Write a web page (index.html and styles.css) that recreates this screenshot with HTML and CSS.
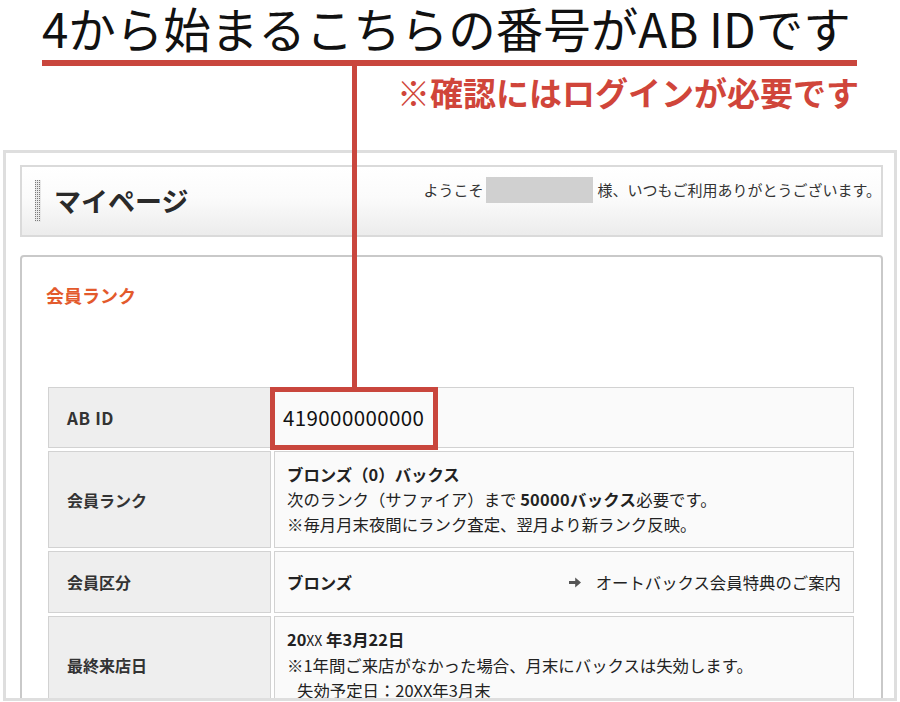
FILE: index.html
```html
<!DOCTYPE html>
<html lang="ja">
<head>
<meta charset="utf-8">
<title>AB ID</title>
<link rel="stylesheet" href="styles.css">
</head>
<body>
<div class="page">
  <header class="notice">
    <h1 class="notice-title">4から始まるこちらの番号がAB IDです</h1>
    <p class="notice-sub">※確認にはログインが必要です</p>
  </header>
  <div class="frame">
    <div class="mypage-head">
      <div class="mypage-title"><span class="dots"></span><h2>マイページ</h2></div>
      <div class="welcome">ようこそ<span class="name-mask"></span>様、いつもご利用ありがとうございます。</div>
    </div>
    <section class="rank-box">
      <h3 class="rank-title">会員ランク</h3>
      <table class="info">
        <tr class="row-short">
          <th class="latin">AB ID</th>
          <td class="abid">419000000000</td>
        </tr>
        <tr>
          <th>会員ランク</th>
          <td><strong>ブロンズ（0）バックス</strong><br>次のランク（サファイア）まで <strong class="num">50000バックス</strong>必要です。<br>※毎月月末夜間にランク査定、翌月より新ランク反映。</td>
        </tr>
        <tr class="row-short row-3">
          <th>会員区分</th>
          <td>
            <div class="split">
              <strong>ブロンズ</strong>
              <a class="guide" href="#"><svg class="arrow" width="12" height="11" viewBox="0 0 12 11"><path d="M0 3.9h6.2V0.5L12 5.5 6.2 10.5V7.1H0z" fill="#555"/></svg>オートバックス会員特典のご案内</a>
            </div>
          </td>
        </tr>
        <tr>
          <th>最終来店日</th>
          <td><strong>20<span class="xx">XX</span> 年3月22日</strong><br>※1年間ご来店がなかった場合、月末にバックスは失効します。<br><span class="indent">失効予定日：20XX年3月末</span></td>
        </tr>
      </table>
    </section>
  </div>
  <div class="callout-line"></div>
  <div class="callout-box"></div>
</div>
</body>
</html>
```
FILE: styles.css
```css
* { box-sizing: border-box; }
html, body { margin: 0; padding: 0; }
body {
  width: 900px;
  height: 702px;
  overflow: hidden;
  background: #fff;
  font-family: "Noto Sans CJK JP", "Noto Sans", sans-serif;
  color: #333;
}
.page {
  position: relative;
  width: 900px;
  height: 702px;
  overflow: hidden;
}
.notice {
  height: 150px;
  padding-top: 4px;
}
.notice-title {
  margin: 0 43px 0 42px;
  font-size: 47.5px;
  font-weight: 400;
  line-height: 47px;
  color: #111;
  padding-bottom: 9px;
  border-bottom: 6px solid #c9463d;
  white-space: nowrap;
}
.notice-sub {
  margin: 10px 41px 0 0;
  text-align: right;
  font-size: 33px;
  font-weight: 700;
  line-height: 33px;
  color: #d0453a;
  white-space: nowrap;
}
.frame {
  margin-left: 3px;
  width: 894px;
  height: 551px;
  border: 3px solid #dedede;
  padding: 12px 11px 0 14px;
  overflow: hidden;
}
.mypage-head {
  height: 72px;
  border: 2px solid #dadada;
  background: linear-gradient(#ffffff 0%, #fbfbfb 45%, #ececec 100%);
  display: flex;
  justify-content: space-between;
  align-items: flex-start;
}
.mypage-title {
  display: flex;
  align-items: center;
  height: 100%;
  padding-left: 13px;
}
.dots {
  display: block;
  width: 6px;
  height: 42px;
  background-color: #7a7a7a;
  background-image: linear-gradient(90deg, transparent 50%, #e8e8e8 50%), linear-gradient(transparent 50%, #e8e8e8 50%);
  background-size: 2px 2px;
}
.mypage-title h2 {
  margin: 0 0 0 13px;
  font-size: 27px;
  font-weight: 700;
  line-height: 30px;
  color: #2a2a2a;
}
.welcome {
  display: flex;
  align-items: center;
  padding: 10px 0 0 0;
  font-size: 15px;
  line-height: 26px;
  color: #333;
  white-space: nowrap;
}
.name-mask {
  display: block;
  width: 107px;
  height: 26px;
  background: #d0d0d0;
  margin: 0 4px 0 3px;
}
.rank-box {
  margin-top: 18px;
  height: 600px;
  border: 2px solid #c9c9c9;
  border-radius: 4px;
  padding: 26px 0 0 23px;
}
.rank-title {
  margin: 0 0 0 1px;
  font-size: 18px;
  line-height: 24px;
  font-weight: 700;
  color: #e35a2c;
}
.info {
  margin-top: 77px;
  width: 812px;
  table-layout: fixed;
  border-collapse: separate;
  border-spacing: 3px;
}
.info th {
  width: 223px;
  background: #eeeeee;
  border: 1px solid #d2d2d2;
  text-align: left;
  vertical-align: middle;
  padding: 0 0 0 18px;
  font-size: 16px;
  font-weight: 700;
  color: #333;
}
.info th.latin {
  font-size: 17px;
  letter-spacing: 0.6px;
}
.info td {
  background: #fafafa;
  border: 1px solid #d2d2d2;
  padding: 10px 12px;
  font-size: 16.4px;
  line-height: 25px;
  color: #222;
  vertical-align: middle;
  white-space: nowrap;
}
.info strong { font-weight: 700; color: #222; }
.info strong.num { letter-spacing: 0.3px; }
.row-short th, .row-short td { height: 61px; }
.row-3 th, .row-3 td { height: 62px; }
.info td.abid {
  padding-left: 8px;
  font-size: 20.5px;
  letter-spacing: 0.4px;
  color: #111;
}
.split {
  display: flex;
  justify-content: space-between;
  align-items: center;
}
.guide {
  display: flex;
  align-items: center;
  color: #222;
  text-decoration: none;
}
.arrow { margin-right: 15px; }
.xx {
  font-weight: 400;
  font-size: 14px;
}
.indent { padding-left: 10px; }
.callout-line {
  position: absolute;
  left: 352px;
  top: 60px;
  width: 5px;
  height: 327px;
  background: #c9463d;
}
.callout-box {
  position: absolute;
  left: 270px;
  top: 387px;
  width: 168px;
  height: 63px;
  border: 5px solid #c9463d;
}
```
